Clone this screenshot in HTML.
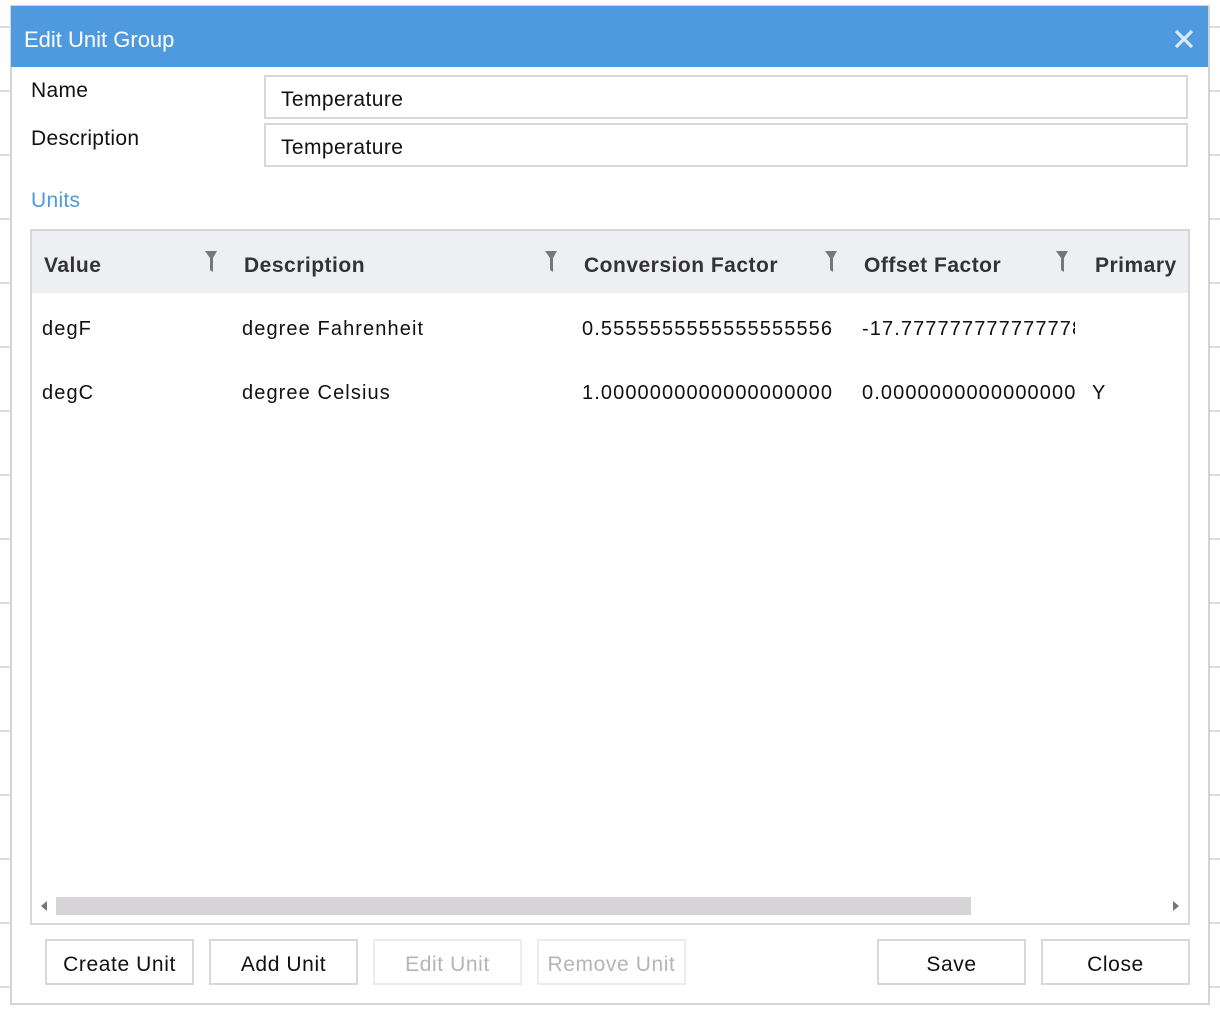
<!DOCTYPE html>
<html><head><meta charset="utf-8"><style>
*{margin:0;padding:0;box-sizing:border-box}
body{width:1220px;height:1012px;background:#fff;position:relative;overflow:hidden;font-family:"Liberation Sans",sans-serif;color:#1a1a1a}
.a{position:absolute}
.hl{position:absolute;height:2px;background:#dcdcdc}
.dlg{left:10px;top:5px;width:1200px;height:1000px;border:2px solid #d4d4d4;background:#fff}
.title{left:11px;top:6px;width:1197px;height:61px;background:#4f9ade;color:#fff;font-size:22px;padding:21px 0 0 13px;font-weight:300}
.inp{border:2px solid #d8d8d8;background:#fff;font-size:21px;padding:11px 0 0 15px;color:#111;letter-spacing:0.4px}
.lbl{font-size:21px;color:#111;letter-spacing:0.3px}
.hdr{font-size:21px;font-weight:bold;color:#333;top:254px;letter-spacing:0.5px}
.cell{font-size:20px;color:#111;white-space:nowrap;overflow:hidden;letter-spacing:1.1px}
.btn{top:939px;width:149px;height:46px;border:2px solid #d8d8d8;font-size:21px;text-align:center;padding-top:12px;color:#111;letter-spacing:0.6px}
.dis{color:#b5b5b5;border-color:#ececec}
.fi{top:250px;width:12px;height:22px}
</style></head><body>
<div class="hl" style="left:0;top:26px;width:10px"></div>
<div class="hl" style="left:0;top:90px;width:10px"></div>
<div class="hl" style="left:0;top:154px;width:10px"></div>
<div class="hl" style="left:0;top:218px;width:10px"></div>
<div class="hl" style="left:0;top:282px;width:10px"></div>
<div class="hl" style="left:0;top:346px;width:10px"></div>
<div class="hl" style="left:0;top:410px;width:10px"></div>
<div class="hl" style="left:0;top:474px;width:10px"></div>
<div class="hl" style="left:0;top:538px;width:10px"></div>
<div class="hl" style="left:0;top:602px;width:10px"></div>
<div class="hl" style="left:0;top:666px;width:10px"></div>
<div class="hl" style="left:0;top:730px;width:10px"></div>
<div class="hl" style="left:0;top:794px;width:10px"></div>
<div class="hl" style="left:0;top:858px;width:10px"></div>
<div class="hl" style="left:0;top:922px;width:10px"></div>
<div class="hl" style="left:0;top:986px;width:10px"></div>
<div class="hl" style="left:1210px;top:26px;width:10px"></div>
<div class="hl" style="left:1210px;top:90px;width:10px"></div>
<div class="hl" style="left:1210px;top:154px;width:10px"></div>
<div class="hl" style="left:1210px;top:218px;width:10px"></div>
<div class="hl" style="left:1210px;top:282px;width:10px"></div>
<div class="hl" style="left:1210px;top:346px;width:10px"></div>
<div class="hl" style="left:1210px;top:410px;width:10px"></div>
<div class="hl" style="left:1210px;top:474px;width:10px"></div>
<div class="hl" style="left:1210px;top:538px;width:10px"></div>
<div class="hl" style="left:1210px;top:602px;width:10px"></div>
<div class="hl" style="left:1210px;top:666px;width:10px"></div>
<div class="hl" style="left:1210px;top:730px;width:10px"></div>
<div class="hl" style="left:1210px;top:794px;width:10px"></div>
<div class="hl" style="left:1210px;top:858px;width:10px"></div>
<div class="hl" style="left:1210px;top:922px;width:10px"></div>
<div class="hl" style="left:1210px;top:986px;width:10px"></div>

<div class="a dlg"></div>
<div class="a title">Edit Unit Group</div>
<svg class="a" style="left:1174px;top:29px" width="20" height="20" viewBox="0 0 20 20"><path d="M2 2L18 18M18 2L2 18" stroke="#dbe9f7" stroke-width="3.2"/></svg>

<div class="a lbl" style="left:31px;top:79px">Name</div>
<div class="a lbl" style="left:31px;top:127px">Description</div>
<div class="a inp" style="left:264px;top:75px;width:924px;height:44px">Temperature</div>
<div class="a inp" style="left:264px;top:123px;width:924px;height:44px">Temperature</div>
<div class="a" style="left:31px;top:189px;font-size:21px;color:#4f9ade;letter-spacing:0.3px">Units</div>

<div class="a" style="left:30px;top:229px;width:1160px;height:696px;border:2px solid #d8d8d8"></div>
<div class="a" style="left:32px;top:231px;width:1156px;height:62px;background:#eeeff3"></div>
<div class="a hdr" style="left:44px">Value</div>
<div class="a hdr" style="left:244px">Description</div>
<div class="a hdr" style="left:584px">Conversion Factor</div>
<div class="a hdr" style="left:864px">Offset Factor</div>
<div class="a hdr" style="left:1095px;width:93px;overflow:hidden;white-space:nowrap">Primary</div>
<svg class="a fi" style="left:205px" viewBox="0 0 12 22"><path d="M0 1H12L8 8V22L5 20V8Z" fill="#777"/></svg>
<svg class="a fi" style="left:545px" viewBox="0 0 12 22"><path d="M0 1H12L8 8V22L5 20V8Z" fill="#777"/></svg>
<svg class="a fi" style="left:825px" viewBox="0 0 12 22"><path d="M0 1H12L8 8V22L5 20V8Z" fill="#777"/></svg>
<svg class="a fi" style="left:1056px" viewBox="0 0 12 22"><path d="M0 1H12L8 8V22L5 20V8Z" fill="#777"/></svg>

<div class="a cell" style="left:42px;top:318px">degF</div>
<div class="a cell" style="left:242px;top:318px">degree Fahrenheit</div>
<div class="a cell" style="left:582px;top:318px;width:256px">0.5555555555555555556</div>
<div class="a cell" style="left:862px;top:318px;width:213px">-17.777777777777778</div>
<div class="a cell" style="left:42px;top:382px">degC</div>
<div class="a cell" style="left:242px;top:382px">degree Celsius</div>
<div class="a cell" style="left:582px;top:382px;width:256px">1.0000000000000000000</div>
<div class="a cell" style="left:862px;top:382px;width:216px">0.0000000000000000</div>
<div class="a cell" style="left:1092px;top:382px">Y</div>

<div class="a" style="left:56px;top:897px;width:915px;height:18px;background:#d6d4d6"></div>
<svg class="a" style="left:40px;top:900px" width="8" height="12"><path d="M7 1V11L1 6Z" fill="#777"/></svg>
<svg class="a" style="left:1172px;top:900px" width="8" height="12"><path d="M1 1V11L7 6Z" fill="#777"/></svg>

<div class="a btn" style="left:45px">Create Unit</div>
<div class="a btn" style="left:209px">Add Unit</div>
<div class="a btn dis" style="left:373px">Edit Unit</div>
<div class="a btn dis" style="left:537px">Remove Unit</div>
<div class="a btn" style="left:877px">Save</div>
<div class="a btn" style="left:1041px">Close</div>
</body></html>
